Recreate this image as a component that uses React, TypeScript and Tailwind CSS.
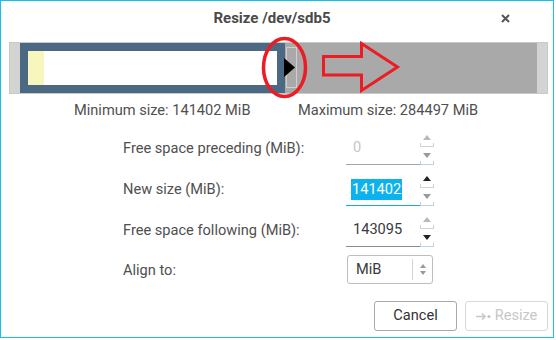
import React from "react";

function Up({ c }: { c: string }) {
  return <div className="w-0 h-0 border-x-[4px] border-x-transparent border-b-[5px]" style={{ borderBottomColor: c }} />;
}
function Down({ c }: { c: string }) {
  return <div className="w-0 h-0 border-x-[4px] border-x-transparent border-t-[5px]" style={{ borderTopColor: c }} />;
}

function Spin({
  value,
  line,
  up,
  down,
  textColor,
  selected,
}: {
  value: string;
  line: string;
  up: string;
  down: string;
  textColor: string;
  selected?: boolean;
}) {
  return (
    <div className="flex h-[33px] w-[88px]">
      <div className="w-[74px] h-full border-b flex items-center pl-[5px]" style={{ borderBottomColor: line }}>
        {selected ? (
          <span className="bg-[#0cb2ee] text-white px-[1px] leading-[21px]">{value}</span>
        ) : (
          <span className="pl-[2px]" style={{ color: textColor }}>{value}</span>
        )}
      </div>
      <div className="w-[14px] h-full flex flex-col">
        <div className="h-[15px] flex flex-col items-center justify-end">
          <Up c={up} />
          <div className="w-full h-[4px] mt-[3px] border-x border-b border-[#cdd3d8]" />
        </div>
        <div className="h-[18px] flex flex-col items-center justify-end">
          <Down c={down} />
          <div className="w-full h-[4px] mt-[3px] border-x border-b border-[#b9d3e2]" />
        </div>
      </div>
    </div>
  );
}

export default function App() {
  return (
    <div className="w-[556px] h-[340px] bg-white font-[Roboto,sans-serif] text-[14.6px] text-[#4f4f4f] relative">
      <div className="w-[554px] h-[338px] border border-[#14c0f2] flex flex-col relative">
        {/* title */}
        <div className="h-[34px] flex items-center justify-center relative pr-[10px]">
          <span className="font-bold text-[15px] text-[#4a4a4a]">Resize /dev/sdb5</span>
          <svg className="absolute right-[43px] top-[13px]" width="9" height="9" viewBox="0 0 9 9">
            <path d="M1 1 L8 8 M8 1 L1 8" stroke="#555" strokeWidth="2" />
          </svg>
        </div>

        {/* partition graphic */}
        <div className="ml-[8px] mt-[7px] w-[539px] h-[52px] border border-[#c9c9c9] flex relative">
          <div className="w-[10px] h-full bg-[#d3d3d3]" />
          <div className="w-[265px] h-full bg-[#4b6983] p-[8px] flex">
            <div className="w-[16px] h-full bg-[#f7f7bd]" />
            <div className="flex-1 h-full bg-white" />
          </div>
          <div className="flex-1 h-full bg-[#a9a9a9] relative">
            <div className="absolute left-[1px] top-[4px] w-[11px] h-[41px] border border-[#cfcfcf]" />
          </div>
          <div className="w-[10px] h-full bg-[#d3d3d3]" />
        </div>

        {/* min / max */}
        <div className="mt-[8px] flex pl-[73px] h-[16px] leading-[16px]">
          <span className="w-[224px]">Minimum size: 141402 MiB</span>
          <span>Maximum size: 284497 MiB</span>
        </div>

        {/* form */}
        <div className="mt-[14px] pl-[122px] flex flex-col">
          <div className="flex items-center h-[33px]">
            <span className="w-[223px]">Free space preceding (MiB):</span>
            <Spin value="0" line="#a6a6a6" up="#b9b9b9" down="#9a9a9a" textColor="#c6c6c6" />
          </div>
          <div className="flex items-center h-[33px] mt-[8px]">
            <span className="w-[223px]">New size (MiB):</span>
            <Spin value="141402" line="#1aa6e0" up="#222" down="#9a9a9a" textColor="#333" selected />
          </div>
          <div className="flex items-center h-[33px] mt-[8px]">
            <span className="w-[223px]">Free space following (MiB):</span>
            <Spin value="143095" line="#8c8c8c" up="#b9b9b9" down="#222" textColor="#3a3a3a" />
          </div>
          <div className="flex items-center h-[29px] mt-[8px]">
            <span className="w-[224px] pt-[2px]">Align to:</span>
            <div className="w-[86px] h-[29px] border border-[#bdbdbd] rounded-[3px] flex items-center">
              <span className="pl-[8px] w-[64px] text-[#3a3a3a]">MiB</span>
              <div className="w-px h-[21px] bg-[#d6d6d6]" />
              <div className="flex-1 flex flex-col items-center gap-[3px]">
                <div className="w-0 h-0 border-x-[3px] border-x-transparent border-b-[4px] border-b-[#999]" />
                <div className="w-0 h-0 border-x-[3px] border-x-transparent border-t-[4px] border-t-[#999]" />
              </div>
            </div>
          </div>
        </div>

        {/* buttons */}
        <div className="mt-[17px] flex justify-end pr-[5px] gap-[8px]">
          <button className="w-[83px] h-[30px] border border-[#a9a9a9] rounded-[3px] text-[#333] bg-white">Cancel</button>
          <button className="w-[83px] h-[30px] border border-[#d8d8d8] rounded-[3px] text-[#c7c7c7] bg-white flex items-center justify-center gap-[4px]">
            <svg width="15" height="9" viewBox="0 0 15 9">
              <path d="M0 4.5 H9 M6 1.5 L9 4.5 L6 7.5" stroke="#c7c7c7" strokeWidth="1.6" fill="none" />
              <circle cx="13" cy="4.5" r="1.6" fill="#c7c7c7" />
            </svg>
            <span>Resize</span>
          </button>
        </div>
      </div>

      {/* annotations */}
      <svg className="absolute left-0 top-0 pointer-events-none" width="556" height="340">
        <polygon points="284,58 295,67.5 284,77" fill="#000" />
        <ellipse cx="284.5" cy="67.5" rx="21" ry="29" fill="none" stroke="#ec1c24" strokeWidth="3.5" />
        <polygon
          points="323.5,56.5 361.5,56.5 361.5,43.5 397.5,67 361.5,90.5 361.5,75 323.5,75"
          fill="none"
          stroke="#ec1c24"
          strokeWidth="3"
        />
      </svg>
    </div>
  );
}
